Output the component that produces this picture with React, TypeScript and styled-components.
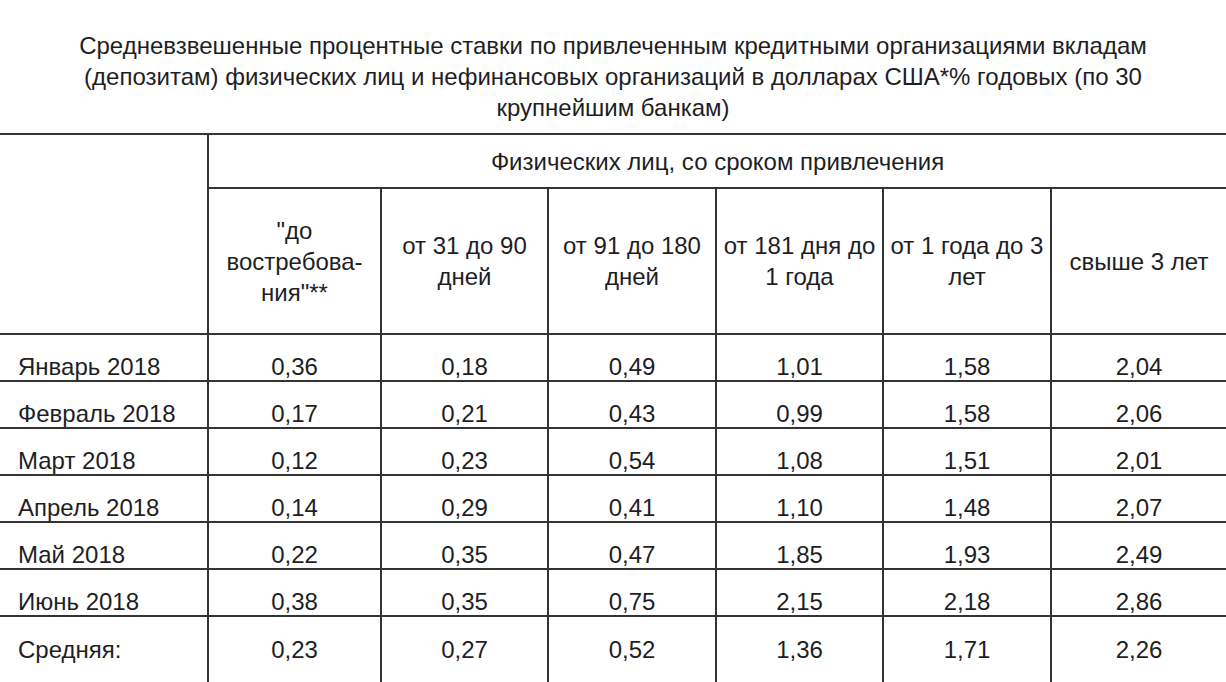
import React from "react";
import styled, { createGlobalStyle } from "styled-components";

const GlobalStyle = createGlobalStyle`
  html, body {
    margin: 0;
    padding: 0;
    background: #ffffff;
    overflow: hidden;
  }
  body {
    font-family: "Liberation Sans", Arial, sans-serif;
    color: #202020;
  }
`;

const Page = styled.div`
  width: 1226px;
  height: 682px;
  overflow: hidden;
  display: flex;
  flex-direction: column;
`;

const Title = styled.h1`
  margin: 0;
  padding: 30px 0 0;
  height: 133px;
  flex: none;
  box-sizing: border-box;
  font-size: 24px;
  font-weight: normal;
  line-height: 31px;
  text-align: center;
  white-space: nowrap;
  color: #1e1e24;
`;

const Table = styled.table`
  border-collapse: collapse;
  table-layout: fixed;
  width: 1226px;
  flex: none;
  font-size: 24px;
  color: #1e1e24;
  border-top: 2px solid #333;
`;

const HeadCell = styled.th<{ $h?: number }>`
  font-weight: normal;
  text-align: center;
  vertical-align: middle;
  padding: 0 2px;
  line-height: 31px;
  height: ${(p) => p.$h ?? 0}px;
  border: 2px solid #333;
  &:first-child {
    border-left: none;
  }
  &:last-child {
    border-right: none;
  }
`;

const Row = styled.tr<{ $tall?: boolean }>`
  height: ${(p) => (p.$tall ? 90 : 47)}px;
`;

const Cell = styled.td<{ $left?: boolean; $tall?: boolean }>`
  text-align: ${(p) => (p.$left ? "left" : "center")};
  padding-top: ${(p) => (p.$tall ? 19 : 0)}px;
  padding-right: 0;
  padding-bottom: 0;
  padding-left: ${(p) => (p.$left ? 18 : 0)}px;
  vertical-align: ${(p) => (p.$tall ? "top" : "bottom")};
  line-height: 27px;
  border: 2px solid #333;
  &:first-child {
    border-left: none;
  }
  &:last-child {
    border-right: none;
  }
`;

const cols = [208, 173, 167, 168, 167, 168, 175];

const rows: [string, string[]][] = [
  ["Январь 2018", ["0,36", "0,18", "0,49", "1,01", "1,58", "2,04"]],
  ["Февраль 2018", ["0,17", "0,21", "0,43", "0,99", "1,58", "2,06"]],
  ["Март 2018", ["0,12", "0,23", "0,54", "1,08", "1,51", "2,01"]],
  ["Апрель 2018", ["0,14", "0,29", "0,41", "1,10", "1,48", "2,07"]],
  ["Май 2018", ["0,22", "0,35", "0,47", "1,85", "1,93", "2,49"]],
  ["Июнь 2018", ["0,38", "0,35", "0,75", "2,15", "2,18", "2,86"]],
  ["Средняя:", ["0,23", "0,27", "0,52", "1,36", "1,71", "2,26"]],
];

export default function App() {
  return (
    <Page>
      <GlobalStyle />
      <Title>
        Средневзвешенные процентные ставки по привлеченным кредитными организациями вкладам
        <br />
        (депозитам) физических лиц и нефинансовых организаций в долларах США*% годовых (по 30
        <br />
        крупнейшим банкам)
      </Title>
      <Table>
        <colgroup>
          {cols.map((w, i) => (
            <col key={i} style={{ width: w }} />
          ))}
        </colgroup>
        <thead>
          <tr>
            <HeadCell rowSpan={2} />
            <HeadCell colSpan={6} $h={52}>
              Физических лиц, со сроком привлечения
            </HeadCell>
          </tr>
          <tr>
            <HeadCell $h={144}>
              "до
              <br />
              востребова-
              <br />
              ния"**
            </HeadCell>
            <HeadCell $h={144}>
              от 31 до 90
              <br />
              дней
            </HeadCell>
            <HeadCell $h={144}>
              от 91 до 180
              <br />
              дней
            </HeadCell>
            <HeadCell $h={144}>
              от 181 дня до
              <br />1 года
            </HeadCell>
            <HeadCell $h={144}>
              от 1 года до 3
              <br />
              лет
            </HeadCell>
            <HeadCell $h={144}>свыше 3 лет</HeadCell>
          </tr>
        </thead>
        <tbody>
          {rows.map(([label, vals], i) => {
            const tall = i === rows.length - 1;
            return (
              <Row key={label} $tall={tall}>
                <Cell $left $tall={tall}>
                  {label}
                </Cell>
                {vals.map((v, j) => (
                  <Cell key={j} $tall={tall}>
                    {v}
                  </Cell>
                ))}
              </Row>
            );
          })}
        </tbody>
      </Table>
    </Page>
  );
}
